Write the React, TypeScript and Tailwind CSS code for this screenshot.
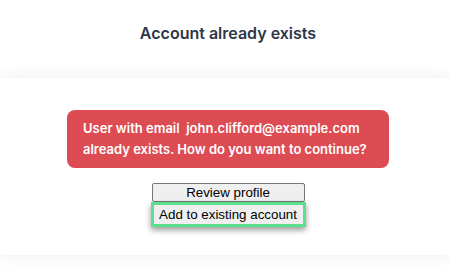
export default function App() {
  return (
    <div className="min-h-[271px] bg-white font-['Inter',sans-serif]">
      <header className="flex h-[65px] items-center justify-center pl-[6px]">
        <h1 className="text-base font-semibold text-[#2d3748]">Account already exists</h1>
      </header>

      <main className="mt-[13px] flex flex-col items-center bg-white pt-8 pb-7 pl-[6px] shadow-[0_0_16px_rgba(0,0,0,0.08)]">
        <div className="w-[322px] rounded-lg bg-[#dc4c52] px-4 py-2 text-left text-[13px] leading-[21px] font-semibold whitespace-nowrap text-white">
          User with email&nbsp; john.clifford@example.com
          <br />
          already exists. How do you want to continue?
        </div>

        <div className="mt-[15px] flex flex-col items-center font-['Liberation_Sans',Arial,sans-serif] text-[13.33px] text-black">
          <button
            type="button"
            className="h-[19px] w-[153px] rounded-[2px] border border-[#767676] bg-[#efefef] leading-[17px]"
          >
            Review profile
          </button>
          <button
            type="button"
            className="h-[25px] w-[155px] border-[3px] border-[#5ce08f] bg-[#efefef] leading-[19px] shadow-[0_3px_6px_rgba(0,0,0,0.4)]"
          >
            Add to existing account
          </button>
        </div>
      </main>
    </div>
  );
}
